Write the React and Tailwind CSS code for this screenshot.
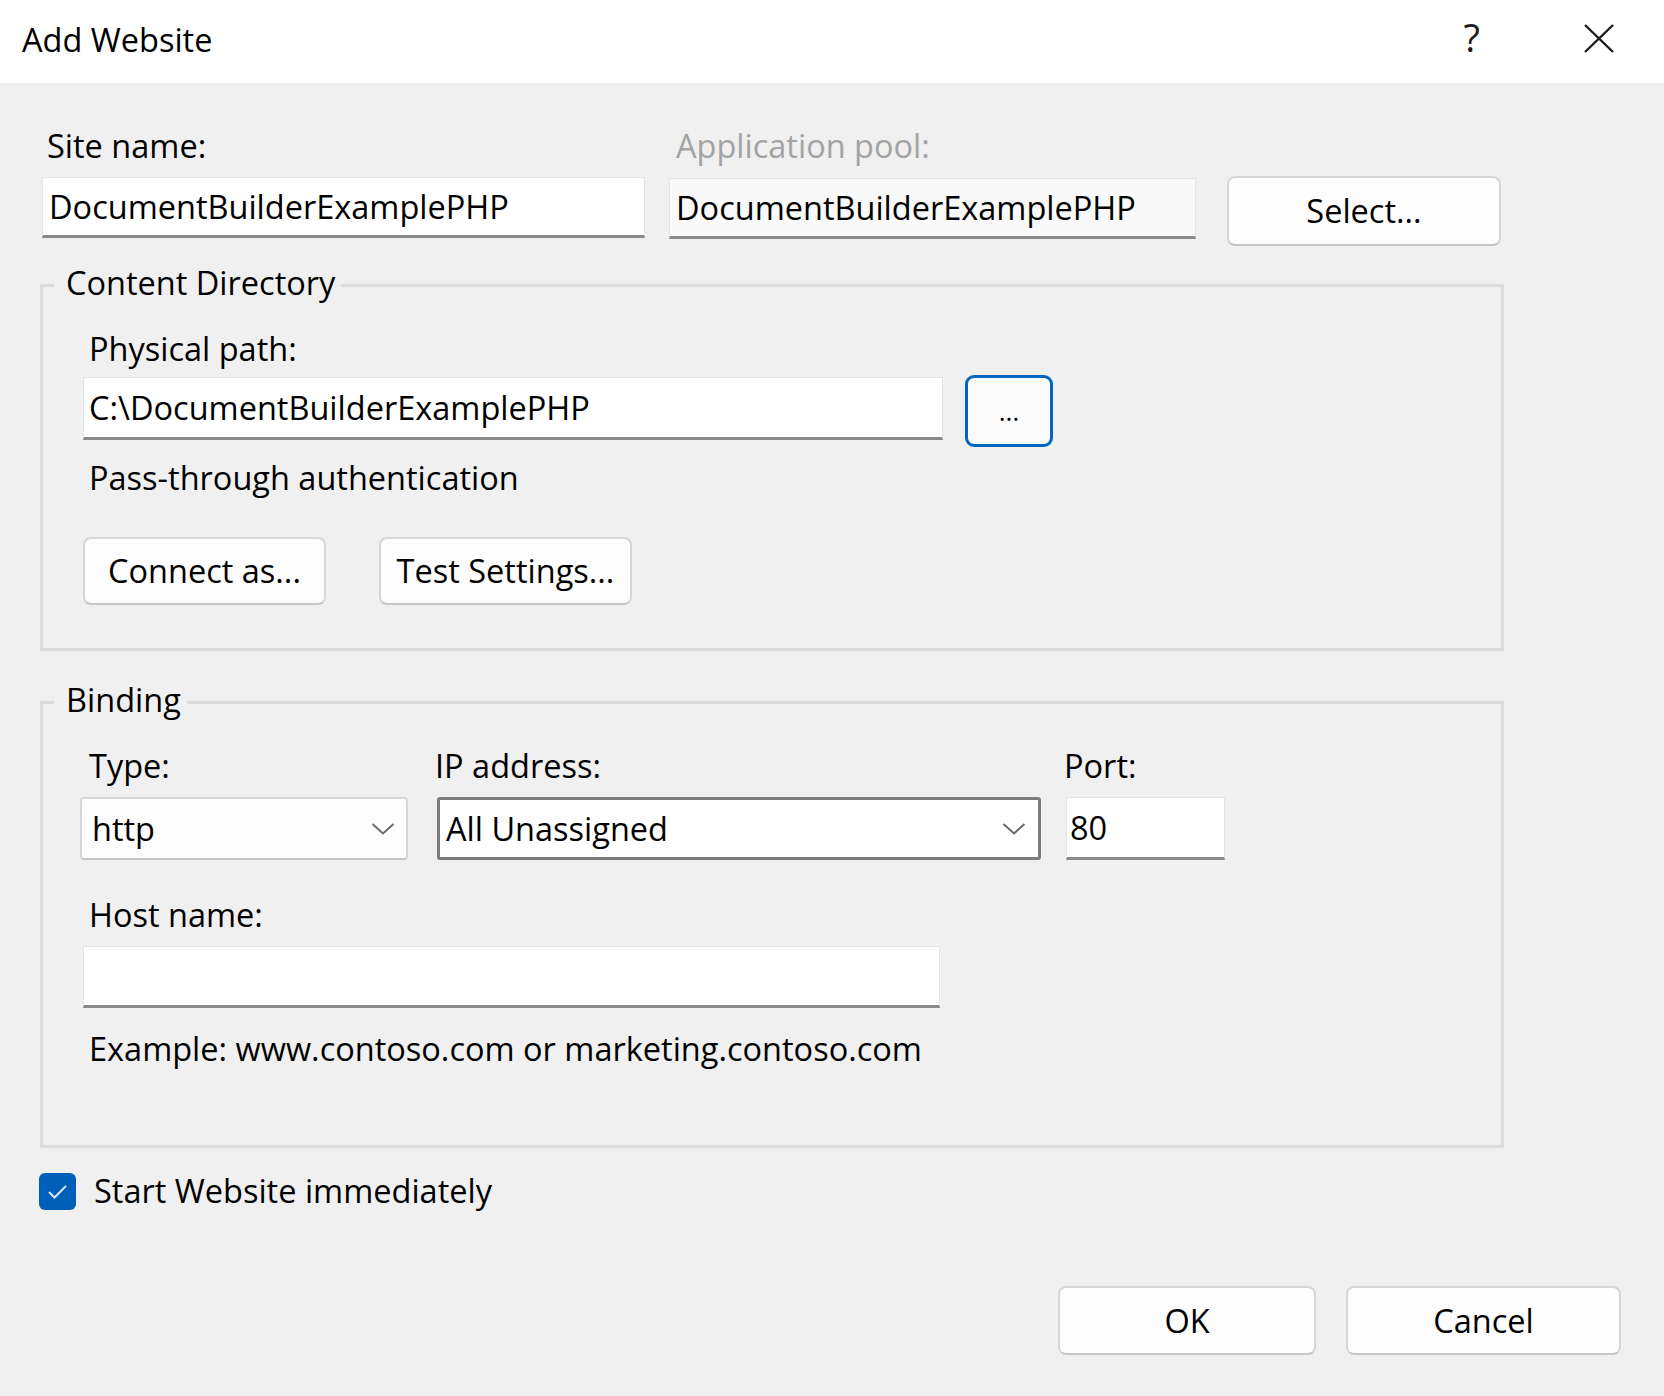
import React from "react";

function Label({ children, className = "" }) {
  return (
    <div className={`h-[40px] leading-[40px] whitespace-nowrap ${className}`}>
      {children}
    </div>
  );
}

function TextBox({ children, className = "" }) {
  return (
    <div
      className={`flex items-center border border-[#e4e4e4] border-b-[3px] border-b-[#8a8a8a] whitespace-nowrap leading-[40px] ${className}`}
    >
      {children}
    </div>
  );
}

function Button({ children, className = "" }) {
  return (
    <div
      className={`flex items-center justify-center rounded-[8px] border-2 border-[#d6d6d6] border-b-[#c6c6c6] bg-[#fdfdfd] leading-[40px] whitespace-nowrap ${className}`}
    >
      {children}
    </div>
  );
}

function Chevron() {
  return (
    <svg width="24" height="14" viewBox="0 0 24 14" className="shrink-0">
      <polyline
        points="1.5,2 12,11.5 22.5,2"
        fill="none"
        stroke="#6a6a6a"
        strokeWidth="2"
      />
    </svg>
  );
}

function GroupBox({ title, legendLeft, className = "", children }) {
  return (
    <div
      className={`relative w-[1464px] border-[3px] border-[#dcdcdc] ${className}`}
    >
      <div
        className={`absolute -top-[24px] h-[40px] leading-[40px] bg-[#f0f0f0] pl-[12px] pr-[6px] whitespace-nowrap ${legendLeft}`}
      >
        {title}
      </div>
      {children}
    </div>
  );
}

export default function App() {
  return (
    <div className="w-[1664px] h-[1396px] overflow-hidden bg-[#f0f0f0] text-black text-[32.5px] font-['Open_Sans',sans-serif]">
      {/* Title bar */}
      <div className="h-[83px] bg-white flex items-start">
        <div className="ml-[22px] mt-[20px] h-[40px] leading-[40px] whitespace-nowrap">
          Add Website
        </div>
        <div className="flex-1" />
        <div className="mt-[17px] h-[40px] leading-[40px] text-[38px] text-[#1a1a1a]">
          ?
        </div>
        <svg
          width="30"
          height="29"
          viewBox="0 0 30 29"
          className="mt-[24px] ml-[104px] mr-[50px]"
        >
          <line x1="1" y1="1" x2="29" y2="28" stroke="#1a1a1a" strokeWidth="2.4" />
          <line x1="29" y1="1" x2="1" y2="28" stroke="#1a1a1a" strokeWidth="2.4" />
        </svg>
      </div>

      <div className="pl-[40px]">
        {/* Row 1 */}
        <div className="flex items-start mt-[43px]">
          <div className="ml-[2px] w-[603px]">
            <Label className="pl-[5px]">Site name:</Label>
            <TextBox className="mt-[11px] h-[61px] bg-white pl-[6px]">
              DocumentBuilderExamplePHP
            </TextBox>
          </div>
          <div className="ml-[24px] w-[527px]">
            <Label className="pl-[7px] text-[#a3a3a3]">Application pool:</Label>
            <TextBox className="mt-[12px] h-[61px] bg-[#f9f9f9] pl-[6px]">
              DocumentBuilderExamplePHP
            </TextBox>
          </div>
          <Button className="ml-[31px] mt-[50px] w-[274px] h-[70px]">
            Select...
          </Button>
        </div>

        {/* Content Directory */}
        <GroupBox
          title="Content Directory"
          legendLeft="left-[11px]"
          className="mt-[38px] h-[367px] pl-[40px] pt-[42px]"
        >
          <Label className="pl-[6px]">Physical path:</Label>
          <div className="flex items-start mt-[6px]">
            <TextBox className="mt-[2px] w-[860px] h-[63px] bg-white pl-[5px]">
              C:\DocumentBuilderExamplePHP
            </TextBox>
            <div className="ml-[22px] w-[88px] h-[72px] rounded-[9px] border-[3px] border-[#0067c0] bg-[#fbfbfb] flex items-center justify-center leading-[40px] text-[26px]">
              ...
            </div>
          </div>
          <Label className="mt-[11px] pl-[6px]">Pass-through authentication</Label>
          <div className="flex mt-[39px]">
            <Button className="w-[243px] h-[68px]">Connect as...</Button>
            <Button className="ml-[53px] w-[253px] h-[68px]">Test Settings...</Button>
          </div>
        </GroupBox>

        {/* Binding */}
        <GroupBox
          title="Binding"
          legendLeft="left-[11px]"
          className="mt-[50px] h-[447px] pl-[37px] pt-[42px]"
        >
          <div className="flex items-start">
            <div className="w-[328px]">
              <Label className="pl-[9px]">Type:</Label>
              <div className="mt-[11px] h-[63px] flex items-center rounded-[4px] border-2 border-[#d8d8d8] border-b-[#c4c4c4] bg-[#fdfdfd] pl-[10px] pr-[11px] leading-[40px]">
                <span>http</span>
                <div className="flex-1" />
                <Chevron />
              </div>
            </div>
            <div className="ml-[29px] w-[604px]">
              <Label className="-ml-[2px]">IP address:</Label>
              <div className="mt-[11px] h-[63px] flex items-center rounded-[3px] border-[3px] border-[#7c7c7c] bg-white pl-[6px] pr-[12px] leading-[40px] whitespace-nowrap">
                <span>All Unassigned</span>
                <div className="flex-1" />
                <Chevron />
              </div>
            </div>
            <div className="ml-[25px] w-[159px]">
              <Label className="-ml-[2px]">Port:</Label>
              <TextBox className="mt-[11px] h-[63px] bg-white pl-[3px]">80</TextBox>
            </div>
          </div>
          <Label className="mt-[35px] pl-[9px]">Host name:</Label>
          <TextBox className="mt-[11px] ml-[3px] w-[857px] h-[62px] bg-white" />
          <Label className="mt-[21px] pl-[9px]">
            Example: www.contoso.com or marketing.contoso.com
          </Label>
        </GroupBox>

        {/* Checkbox */}
        <div className="flex items-center mt-[23px]">
          <div className="-ml-[1px] w-[37px] h-[37px] rounded-[6px] bg-[#005fb8] flex items-center justify-center">
            <svg width="37" height="37" viewBox="0 0 37 37">
              <polyline
                points="10,19 15.5,24.5 27,13"
                fill="none"
                stroke="#d6e6f7"
                strokeWidth="2"
              />
            </svg>
          </div>
          <Label className="ml-[18px]">Start Website immediately</Label>
        </div>
      </div>

      {/* Bottom buttons */}
      <div className="flex justify-end pr-[43px] mt-[75px]">
        <Button className="w-[258px] h-[69px]">OK</Button>
        <Button className="ml-[30px] w-[275px] h-[69px]">Cancel</Button>
      </div>
    </div>
  );
}
